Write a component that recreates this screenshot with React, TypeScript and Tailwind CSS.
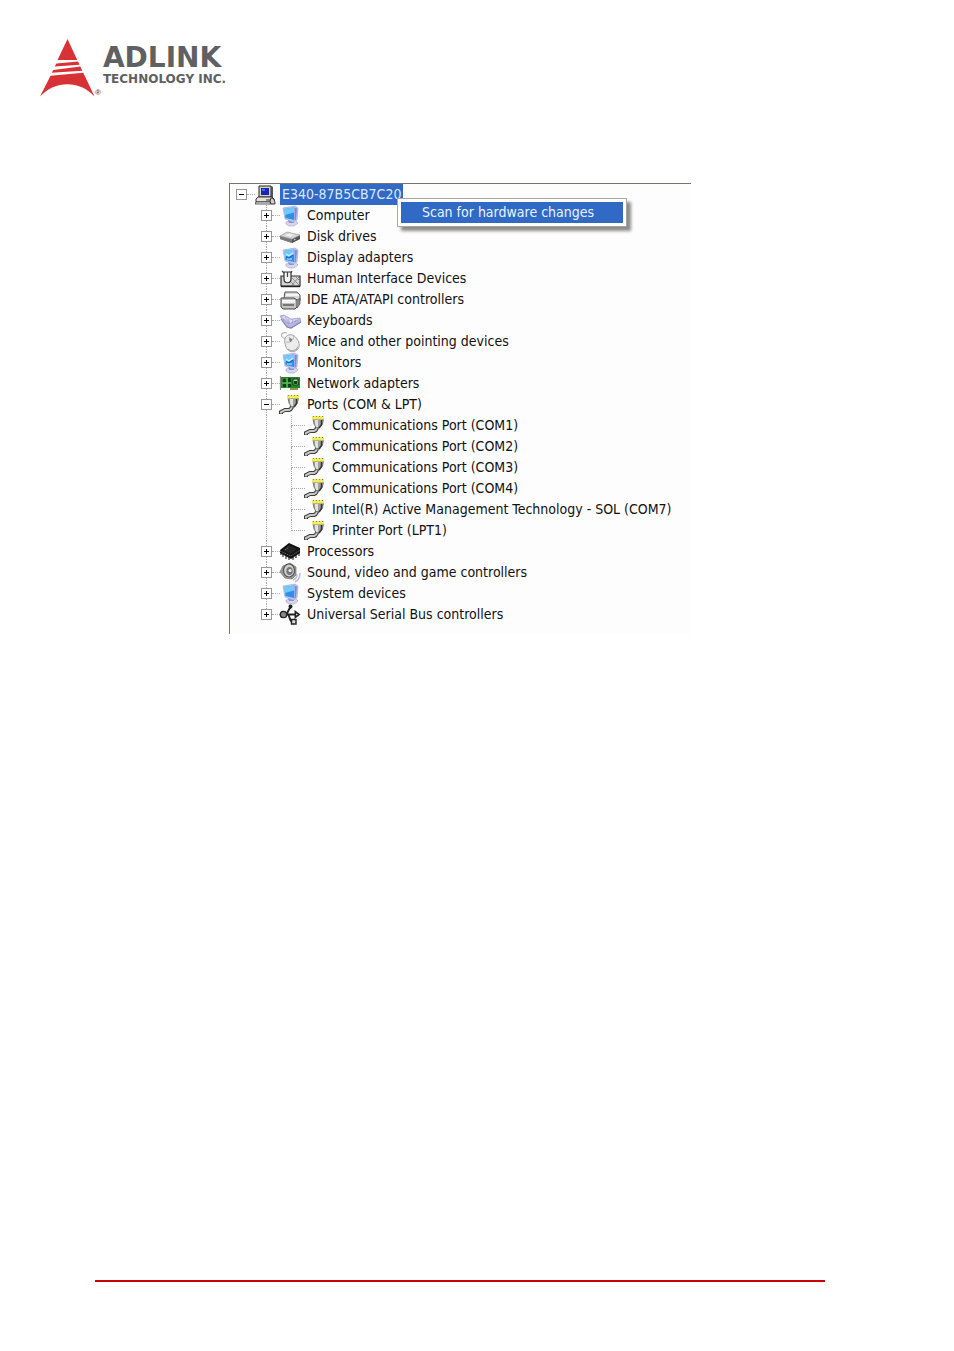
import { useState } from "react";
import type { ReactNode } from "react";

type Kind =
  | "computer" | "disk" | "display" | "hid" | "ide" | "keyboard" | "mouse"
  | "network" | "port" | "cpu" | "sound" | "usb";

type Device = { name: string; kind: Kind; children?: string[] };

const devices: Device[] = [
  { name: "Computer", kind: "computer" },
  { name: "Disk drives", kind: "disk" },
  { name: "Display adapters", kind: "display" },
  { name: "Human Interface Devices", kind: "hid" },
  { name: "IDE ATA/ATAPI controllers", kind: "ide" },
  { name: "Keyboards", kind: "keyboard" },
  { name: "Mice and other pointing devices", kind: "mouse" },
  { name: "Monitors", kind: "display" },
  { name: "Network adapters", kind: "network" },
  {
    name: "Ports (COM & LPT)",
    kind: "port",
    children: [
      "Communications Port (COM1)",
      "Communications Port (COM2)",
      "Communications Port (COM3)",
      "Communications Port (COM4)",
      "Intel(R) Active Management Technology - SOL (COM7)",
      "Printer Port (LPT1)",
    ],
  },
  { name: "Processors", kind: "cpu" },
  { name: "Sound, video and game controllers", kind: "sound" },
  { name: "System devices", kind: "computer" },
  { name: "Universal Serial Bus controllers", kind: "usb" },
];

const monitor = (
  <>
    <path d="M6 16l9-2 3 3-4 3H9l-3-2z" fill="#d6d7ee" stroke="#a9abd0" strokeWidth=".7" />
    <path d="M8 14h6v3H9z" fill="#8b93cf" />
    <path d="M3 2l12-2 3 2-1 12-4 2-8-3z" fill="#b9c9ec" stroke="#9fb0d8" strokeWidth=".7" />
    <path d="M4.500 3l9.500-1.500v12.500L5.500 12z" fill="#2f8fe6" />
    <path d="M4.500 3l9.500-1.500v5L5 9z" fill="#6fcbfb" />
    <path d="M14.500 1.500l2.500 1-1 11-1.500 1z" fill="#8688d2" />
  </>
);

const drawings: Record<Kind, ReactNode> = {
  computer: monitor,
  display: (
    <>
      {monitor}
      <path d="M6 6l3 2 4-3M7 11l5 0" fill="none" stroke="#c9f1ff" strokeWidth="1.200" />
      <path d="M6 8.500l3 1.500 4-3" fill="none" stroke="#1762b8" strokeWidth="1" />
    </>
  ),
  disk: (
    <>
      <path d="M0 9l7-4 13 3v4l-8 4-12-4z" fill="#8a8a8a" />
      <path d="M0 9l7-4 13 3-8 4z" fill="#d6d6d6" stroke="#a2a2a2" strokeWidth=".6" />
      <path d="M5 8.500l4-2 5 1.200-4 2z" fill="#efefef" />
      <path d="M0 9.500l12 3v3.500l-12-4z" fill="#7a7a7a" />
      <path d="M12 12.500l8-4v3.500l-8 4z" fill="#555" />
      <path d="M14 13l1.500-.8" stroke="#9fe09f" strokeWidth="1.200" />
    </>
  ),
  hid: (
    <>
      <path d="M1 7h19v10H1z" fill="#d4d4d4" stroke="#333" strokeWidth="1.200" />
      <path d="M12 9l7 7M16 8l4 4M11 13l3 3M19 8l-7 8" stroke="#8a8a8a" strokeWidth=".9" />
      <path d="M4 3h7v7c0 5-7 5-7 0z" fill="#f4f4f4" stroke="#333" strokeWidth="1.200" />
      <path d="M7.500 3v5M2 2l2 2M12 2l-1 2" stroke="#444" strokeWidth="1.200" />
      <path d="M1 17.500h19" stroke="#222" strokeWidth="1.400" />
    </>
  ),
  ide: (
    <>
      <path d="M5 2h12l3 3v6H8L4 8z" fill="#d9d9d9" stroke="#555" />
      <path d="M6 5h13" stroke="#fff" strokeWidth="1.400" />
      <path d="M1 8h13l3 2v7l-2 2H3l-2-2z" fill="#c2c2c2" stroke="#444" />
      <path d="M2 10h13v3H2z" fill="#f6f6f6" />
      <path d="M3 15h11" stroke="#555" strokeWidth="1.400" />
      <path d="M17 10l3-2v6l-3 4" fill="#888" stroke="#555" strokeWidth=".7" />
    </>
  ),
  keyboard: (
    <>
      <path d="M0 5l4-1 7 4 9-1 1 4-10 6-4-1z" fill="#b9b7e0" stroke="#a5a3cf" strokeWidth=".8" />
      <path d="M2 6l2-1 7 4 7-1-8 5z" fill="#dddcf5" />
      <path d="M3 8l6 5 9-4M5 6l4 6M8 8l2 5M13 9l-1 3M16 9l-1 2" fill="none" stroke="#9997c9" strokeWidth=".7" />
      <path d="M1 8l6 8 4 1 10-6" fill="none" stroke="#8482b5" strokeWidth="1.200" />
    </>
  ),
  mouse: (
    <>
      <path d="M6 7C-1 5 1-1 7 1" fill="none" stroke="#b5b5b5" strokeWidth="1.200" />
      <path d="M5 6c3-5 9-4 12 1 3 4 3 8 0 11-4 3-9 2-11-3-1-3-2-6-1-9z" fill="#ececec" stroke="#a2a2a2" />
      <path d="M6 10c4 1 7-1 8-6M9 5l2 4" fill="none" stroke="#b0b0b0" />
      <path d="M8 17c3 3 8 2 10-2" fill="none" stroke="#b0b0b0" strokeWidth="1.500" />
      <path d="M9 8l1-2 2 1-1 3z" fill="#777" />
    </>
  ),
  network: (
    <>
      <path d="M1 3h19v11H1z" fill="#26852a" />
      <path d="M.5 2v14" stroke="#888" strokeWidth="1.200" />
      <path d="M3 5h3v3H3zM8 4h3v4H8zM3 10h3v3H3zM8 10h3v3H8z" fill="#0b4414" />
      <path d="M13 5h5v6h-5z" fill="#b5d9a8" stroke="#0a3510" />
      <path d="M14 7h3v3h-3z" fill="#1b3c1d" />
      <path d="M2 9h9M7 4v10" stroke="#72c568" />
      <path d="M10 14h8v2h-8z" fill="#8f9a4b" />
    </>
  ),
  port: (
    <>
      <path d="M1 19v-2l4-2h4c3-1 3-3 3-6" fill="none" stroke="#3d3d3d" strokeWidth="4" />
      <path d="M1 18.500v-1.500l4-2h4c3-1 3-3 3-6" fill="none" stroke="#c6c9c5" strokeWidth="2" />
      <path d="M8 3h10.500l-1 5-3 4h-3L9 8z" fill="#9da09c" stroke="#666" strokeWidth=".8" />
      <path d="M10 4h3v7h-2l-1-3z" fill="#e1e1db" />
      <path d="M16.500 4v4.500l-2.500 3.500" fill="none" stroke="#333" strokeWidth="1.400" />
      <path d="M7 0h12v3.500H7z" fill="#eeed62" />
      <path d="M8 .5h11" stroke="#89893b" strokeDasharray="1 2" />
    </>
  ),
  cpu: (
    <>
      <path d="M3 10v5M6 12v5M9 14v4M13 14v4M16 12v4M19 9v5M1 8v5" stroke="#444" strokeWidth="1.300" />
      <path d="M0 8l9-7 11 5v5l-9 6-11-6z" fill="#111" />
      <path d="M3 8l6-5 8 4-6 5z" fill="#242424" />
      <path d="M5 8l4-3M0 9l11 5 9-6" fill="none" stroke="#888" strokeWidth=".8" strokeDasharray="1.500 1" />
    </>
  ),
  sound: (
    <>
      <path d="M3 3l7-3 6 4v8l-4 4-7-1-5-6z" fill="#9a9a9a" stroke="#707070" strokeWidth=".7" />
      <ellipse cx="9" cy="7.500" rx="5.500" ry="6.500" fill="#cfcfcf" stroke="#555" strokeWidth="1.200" />
      <ellipse cx="9.500" cy="8" rx="3.200" ry="4" fill="#777" />
      <circle cx="10" cy="7.500" r="1.500" fill="#eee" />
      <path d="M13 17c3-1 4-3 4-6M15 19c4-2 5-5 5-9" fill="none" stroke="#c0b6e6" strokeWidth="1.500" />
    </>
  ),
  usb: (
    <>
      <path d="M3 9.500h14M6 9.500c2-1 2-6 5-7M8 9.500c2 1 1 7 5 7.500" fill="none" stroke="#222" strokeWidth="2" />
      <circle cx="3.500" cy="9.500" r="3.200" fill="#888" stroke="#222" strokeWidth="1.300" />
      <circle cx="10.500" cy="1.500" r="2" fill="#222" />
      <path d="M11.500 14.500h4.500v4.500h-4.500z" fill="#ddd" stroke="#222" strokeWidth="1.400" />
      <path d="M14.500 5l6 4.500-6 4.500z" fill="#222" />
      <path d="M16 8.500l2 1-2 1z" fill="#ddd" />
    </>
  ),
};

function DeviceIcon({ kind }: { kind: Kind }) {
  return (
    <svg className="h-5 w-5 shrink-0 overflow-visible" viewBox="0 0 20 20" aria-hidden="true">
      {drawings[kind]}
    </svg>
  );
}

function WorkstationIcon() {
  return (
    <svg className="h-5 w-[21px] shrink-0" viewBox="0 0 21 20" aria-hidden="true">
      <path d="M4 1h12v11H4z" fill="#d8d5c8" stroke="#222" />
      <path d="M6 3h8v7H6z" fill="#1725b4" />
      <path d="M7 4h3v2H7z" fill="#4e68ee" />
      <path d="M16 1l2 1v10l-2 1z" fill="#555" />
      <path d="M3 12h14l2 2v3H1v-3z" fill="#e4e2d8" stroke="#333" />
      <path d="M11 15h5" stroke="#333" />
      <path d="M1 17h14l1 2H0z" fill="#f4f4f4" stroke="#333" strokeWidth=".8" />
      <path d="M16 13c3 0 4 3 4 6h-4l-1-3z" fill="#d0d0d0" stroke="#333" />
    </svg>
  );
}

function Toggle({ open, label, onClick }: { open: boolean; label: string; onClick: () => void }) {
  return (
    <button
      type="button"
      aria-label={label}
      aria-expanded={open}
      onClick={onClick}
      className="block h-[11px] w-[11px] shrink-0 border border-[#989898] bg-white"
    >
      <svg className="block h-[9px] w-[9px]" viewBox="0 0 9 9" aria-hidden="true">
        <path d={open ? "M2 4h5v1H2z" : "M2 4h5v1H2zM4 2h1v5H4z"} fill="#000" />
      </svg>
    </button>
  );
}

const guide = "border-l border-dotted border-[#a8a8a8]";
const dash = "w-2 shrink-0 border-t border-dotted border-[#a8a8a8]";

function Branch({ device, last }: { device: Device; last: boolean }) {
  const [open, setOpen] = useState(Boolean(device.children));
  return (
    <li>
      <div className="flex h-[21px] items-center pl-[31px]">
        <div className="flex h-full w-[11px] flex-col items-center">
          <span className={`h-[5px] ${guide}`} />
          <Toggle open={open} label={`Toggle ${device.name}`} onClick={() => setOpen(!open)} />
          <span className={last ? "h-[5px]" : `h-[5px] ${guide}`} />
        </div>
        <span className={dash} />
        <DeviceIcon kind={device.kind} />
        <span className="pl-[7px] whitespace-nowrap">{device.name}</span>
      </div>
      {open && device.children && (
        <ul>
          {device.children.map((name, i) => (
            <li key={name} className="flex h-[21px] items-center pl-9">
              <span className={`h-full w-[25px] shrink-0 ${guide}`} />
              <span className="flex h-full w-[14px] shrink-0 flex-col">
                <span className={`h-[11px] border-b border-dotted border-[#a8a8a8] ${guide}`} />
                <span className={i === device.children!.length - 1 ? "h-[10px]" : `h-[10px] ${guide}`} />
              </span>
              <DeviceIcon kind="port" />
              <span className="pl-[7px] whitespace-nowrap">{name}</span>
            </li>
          ))}
        </ul>
      )}
    </li>
  );
}

function Logo() {
  return (
    <div className="flex text-[#5f6062]">
      <svg className="h-[58px] w-[55px] shrink-0" viewBox="0 0 55 58" aria-hidden="true">
        <g fill="#d93236">
          <path d="M27.500 0L37.300 21H17.500z" />
          <path d="M16.300 24.500L38 22.500 39.500 25.700 14.800 27.500z" />
          <path d="M13.300 31L40.300 27.500 42.300 31.700 11.700 33.800z" />
          <path d="M10.500 36.700L43.300 33.700 54.500 57.500C40 41 15 41 0 57.500z" />
        </g>
      </svg>
      <span className="self-end text-[8px] leading-2 font-bold">®</span>
      <div className="pt-[8px] font-['DejaVu_Sans'] font-bold">
        <div className="pl-[2px] text-[28px] leading-[22px]">ADLINK</div>
        <div className="pt-1 pl-[2px] text-[12px] leading-[12px] whitespace-nowrap">TECHNOLOGY INC.</div>
      </div>
    </div>
  );
}

export default function App() {
  const [open, setOpen] = useState(true);
  return (
    <div className="flex min-h-screen flex-col bg-white font-['Liberation_Sans',sans-serif] text-[#111]">
      <header className="pt-[39px] pl-10">
        <Logo />
      </header>
      <main className="mt-[86px] pl-[24%]">
        <section
          aria-label="Devices"
          className="min-h-[451px] w-full max-w-[462px] border-t border-l border-[#77736a] bg-[#fdfdfd] font-['DejaVu_Sans_Condensed','DejaVu_Sans',sans-serif] text-sm leading-[21px]"
        >
          <div className="relative flex h-[21px] items-center pl-[6px]">
            <Toggle open={open} label="Toggle E340-87B5CB7C20" onClick={() => setOpen(!open)} />
            <span className={dash} />
            <WorkstationIcon />
            <span className="ml-1 bg-[#316ac5] px-[2px] whitespace-nowrap text-[#d9e9ff]">E340-87B5CB7C20</span>
            <div
              role="menu"
              className="absolute top-[14px] left-[167px] z-10 w-[230px] border border-[#aca899] bg-white p-[3px] shadow-[4px_4px_3px_rgba(0,0,0,0.45)]"
            >
              <button type="button" role="menuitem" className="block w-full bg-[#316ac5] pl-[21px] text-left whitespace-nowrap text-[#eaf3ff]">
                Scan for hardware changes
              </button>
            </div>
          </div>
          {open && (
            <ul>
              {devices.map((device, i) => (
                <Branch key={device.name} device={device} last={i === devices.length - 1} />
              ))}
            </ul>
          )}
        </section>
      </main>
      <footer className="mt-auto pr-[129px] pb-[69px] pl-[95px]">
        <hr className="border-t-2 border-[#cc0000]" />
      </footer>
    </div>
  );
}
